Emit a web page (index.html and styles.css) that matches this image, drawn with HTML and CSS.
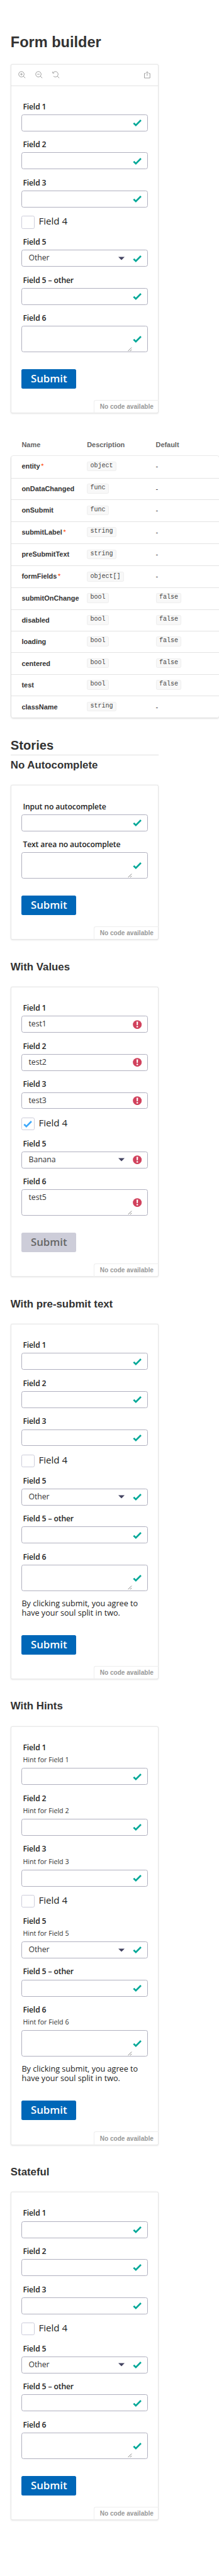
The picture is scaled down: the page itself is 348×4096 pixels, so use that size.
FILE: index.html
```html
<!DOCTYPE html>
<html lang="en">
<head>
<meta charset="utf-8">
<title>Form builder</title>
<link rel="stylesheet" href="styles.css">
</head>
<body>
<svg class="sprite" aria-hidden="true">
  <symbol id="ok" viewBox="0 0 17 17"><path d="M1.6 9.2l4.2 4.1 9.6-9.7" fill="none" stroke="currentColor" stroke-width="3.2"/></symbol>
  <symbol id="bad" viewBox="0 0 17 17"><circle cx="8.5" cy="8.5" r="8.3" fill="currentColor"/><path d="M7 3h3l-.4 6.6H7.400z" fill="#fff"/><circle cx="8.500" cy="12.600" r="1.500" fill="#fff"/></symbol>
  <symbol id="grip" viewBox="0 0 8 8"><path d="M.5 7.500l7-7M4.500 7.500l3-3" fill="none" stroke="#444" stroke-width=".8"/></symbol>
  <symbol id="caret" viewBox="0 0 12 7"><path d="M0 .5h12L6 6.500z" fill="#434361"/></symbol>
</svg>
<main class="page">
<h1>Form builder</h1>
<section class="preview with-bar">
  <div class="toolbar">
    <svg viewBox="0 0 14 14"><circle cx="6" cy="6" r="5.100"/><path d="M9.700 9.700l3.600 3.600M3.700 6h4.600M6 3.700v4.600"/></svg>
    <svg viewBox="0 0 14 14"><circle cx="6" cy="6" r="5.100"/><path d="M9.700 9.700l3.600 3.600M3.700 6h4.600"/></svg>
    <svg viewBox="0 0 14 14"><path d="M1.700 3.300A5.100 5.100 0 1 1 2.400 9.600M9.700 9.700l3.600 3.600M.900 1v2.800h2.800"/></svg>
    <svg class="share" viewBox="0 0 14 14"><path d="M4.300 4.500H1.800v8.600h10.400V4.500H9.700M7 9V1.500M4.900 3.200L7 1.100l2.100 2.100"/></svg>
  </div>
  <div class="form">
    <div class="label">Field 1</div><div class="input"><svg class="state"><use href="#ok"/></svg></div>
    <div class="label">Field 2</div><div class="input"><svg class="state"><use href="#ok"/></svg></div>
    <div class="label">Field 3</div><div class="input"><svg class="state"><use href="#ok"/></svg></div>
    <div class="check"><span class="box"></span><span>Field 4</span></div>
    <div class="label">Field 5</div><div class="input"><span class="value">Other</span><svg class="caret"><use href="#caret"/></svg><svg class="state"><use href="#ok"/></svg></div>
    <div class="label">Field 5 – other</div><div class="input"><svg class="state"><use href="#ok"/></svg></div>
    <div class="label">Field 6</div><div class="input area"><svg class="grip"><use href="#grip"/></svg><svg class="state"><use href="#ok"/></svg></div>
    <div class="submit">Submit</div>
  </div>
  <div class="tag">No code available</div>
</section>

<div class="props">
  <div class="head"><span>Name</span><span>Description</span><span>Default</span></div>
  <div class="rows">
    <div class="row tall"><b>entity<i>*</i></b><span><code>object</code></span><span>-</span></div>
    <div class="row"><b>onDataChanged</b><span><code>func</code></span><span>-</span></div>
    <div class="row"><b>onSubmit</b><span><code>func</code></span><span>-</span></div>
    <div class="row tall"><b>submitLabel<i>*</i></b><span><code>string</code></span><span>-</span></div>
    <div class="row"><b>preSubmitText</b><span><code>string</code></span><span>-</span></div>
    <div class="row tall list"><b>formFields<i>*</i></b><span><code>object[]</code></span><span>-</span></div>
    <div class="row"><b>submitOnChange</b><span><code>bool</code></span><span><code>false</code></span></div>
    <div class="row"><b>disabled</b><span><code>bool</code></span><span><code>false</code></span></div>
    <div class="row"><b>loading</b><span><code>bool</code></span><span><code>false</code></span></div>
    <div class="row"><b>centered</b><span><code>bool</code></span><span><code>false</code></span></div>
    <div class="row"><b>test</b><span><code>bool</code></span><span><code>false</code></span></div>
    <div class="row"><b>className</b><span><code>string</code></span><span>-</span></div>
  </div>
</div>

<h2>Stories</h2>
<h3 class="first">No Autocomplete</h3>
<section class="preview">
  <div class="form">
    <div class="label">Input no autocomplete</div><div class="input"><svg class="state"><use href="#ok"/></svg></div>
    <div class="label">Text area no autocomplete</div><div class="input area"><svg class="grip"><use href="#grip"/></svg><svg class="state"><use href="#ok"/></svg></div>
    <div class="submit">Submit</div>
  </div>
  <div class="tag">No code available</div>
</section>

<h3>With Values</h3>
<section class="preview">
  <div class="form invalid">
    <div class="label">Field 1</div><div class="input"><span class="value">test1</span><svg class="state"><use href="#bad"/></svg></div>
    <div class="label">Field 2</div><div class="input"><span class="value">test2</span><svg class="state"><use href="#bad"/></svg></div>
    <div class="label">Field 3</div><div class="input"><span class="value">test3</span><svg class="state"><use href="#bad"/></svg></div>
    <div class="check"><span class="box"><svg class="tick"><use href="#ok"/></svg></span><span>Field 4</span></div>
    <div class="label">Field 5</div><div class="input"><span class="value">Banana</span><svg class="caret"><use href="#caret"/></svg><svg class="state"><use href="#bad"/></svg></div>
    <div class="label">Field 6</div><div class="input area"><span class="value">test5</span><svg class="grip"><use href="#grip"/></svg><svg class="state"><use href="#bad"/></svg></div>
    <div class="submit disabled">Submit</div>
  </div>
  <div class="tag">No code available</div>
</section>

<h3>With pre-submit text</h3>
<section class="preview">
  <div class="form">
    <div class="label">Field 1</div><div class="input"><svg class="state"><use href="#ok"/></svg></div>
    <div class="label">Field 2</div><div class="input"><svg class="state"><use href="#ok"/></svg></div>
    <div class="label">Field 3</div><div class="input"><svg class="state"><use href="#ok"/></svg></div>
    <div class="check"><span class="box"></span><span>Field 4</span></div>
    <div class="label">Field 5</div><div class="input"><span class="value">Other</span><svg class="caret"><use href="#caret"/></svg><svg class="state"><use href="#ok"/></svg></div>
    <div class="label">Field 5 – other</div><div class="input"><svg class="state"><use href="#ok"/></svg></div>
    <div class="label">Field 6</div><div class="input area"><svg class="grip"><use href="#grip"/></svg><svg class="state"><use href="#ok"/></svg></div>
    <p class="terms">By clicking submit, you agree to<br>have your soul split in two.</p>
    <div class="submit">Submit</div>
  </div>
  <div class="tag">No code available</div>
</section>

<h3>With Hints</h3>
<section class="preview">
  <div class="form">
    <div class="label">Field 1</div><div class="hint">Hint for Field 1</div><div class="input"><svg class="state"><use href="#ok"/></svg></div>
    <div class="label">Field 2</div><div class="hint">Hint for Field 2</div><div class="input"><svg class="state"><use href="#ok"/></svg></div>
    <div class="label">Field 3</div><div class="hint">Hint for Field 3</div><div class="input"><svg class="state"><use href="#ok"/></svg></div>
    <div class="check"><span class="box"></span><span>Field 4</span></div>
    <div class="label">Field 5</div><div class="hint">Hint for Field 5</div><div class="input"><span class="value">Other</span><svg class="caret"><use href="#caret"/></svg><svg class="state"><use href="#ok"/></svg></div>
    <div class="label">Field 5 – other</div><div class="input"><svg class="state"><use href="#ok"/></svg></div>
    <div class="label">Field 6</div><div class="hint">Hint for Field 6</div><div class="input area"><svg class="grip"><use href="#grip"/></svg><svg class="state"><use href="#ok"/></svg></div>
    <p class="terms">By clicking submit, you agree to<br>have your soul split in two.</p>
    <div class="submit">Submit</div>
  </div>
  <div class="tag">No code available</div>
</section>

<h3>Stateful</h3>
<section class="preview">
  <div class="form">
    <div class="label">Field 1</div><div class="input"><svg class="state"><use href="#ok"/></svg></div>
    <div class="label">Field 2</div><div class="input"><svg class="state"><use href="#ok"/></svg></div>
    <div class="label">Field 3</div><div class="input"><svg class="state"><use href="#ok"/></svg></div>
    <div class="check"><span class="box"></span><span>Field 4</span></div>
    <div class="label">Field 5</div><div class="input"><span class="value">Other</span><svg class="caret"><use href="#caret"/></svg><svg class="state"><use href="#ok"/></svg></div>
    <div class="label">Field 5 – other</div><div class="input"><svg class="state"><use href="#ok"/></svg></div>
    <div class="label">Field 6</div><div class="input area"><svg class="grip"><use href="#grip"/></svg><svg class="state"><use href="#ok"/></svg></div>
    <div class="submit">Submit</div>
  </div>
  <div class="tag">No code available</div>
</section>
</main>
</body>
</html>
```
FILE: styles.css
```css
* { box-sizing: border-box; }
html { overflow: hidden; background: #fff; }
body { margin: 0; }
.sprite { position: absolute; width: 0; height: 0; }

.page {
  zoom: 0.8412;
  width: 414px;
  height: 4869px;
  padding: 63.6px 0 0 20px;
  overflow: hidden;
  font-family: "Liberation Sans", sans-serif;
  color: #333;
}
h1, h2, h3, p { margin: 0; }
h1 { font-size: 28px; line-height: 32px; margin-bottom: 25.700px; }
h2 { width: 280px; height: 32px; margin: 39.300px 0 7.700px; border-bottom: 1px solid #e0e0e0; font-size: 24px; line-height: 28px; }
h3 { margin: 39.700px 0 25.200px; font-size: 20px; line-height: 24px; }
h3.first { margin: 0 0 24.800px; }

/* preview card */
.preview {
  display: flex;
  flex-direction: column;
  width: 280px;
  padding-top: 31px;
  border-radius: 4px;
  box-shadow: inset 0 0 0 1px #e2e2e2, 0 1px 3px rgba(0, 0, 0, .1);
}
.preview.with-bar { padding-top: 0; }
.toolbar {
  display: flex;
  align-items: center;
  gap: 18px;
  height: 41px;
  margin-bottom: 30px;
  padding: 0 14.500px 0 15px;
  border-bottom: 1px solid #e2e2e2;
}
.toolbar svg { width: 14px; height: 14px; fill: none; stroke: #999; stroke-width: 1.100; }
.toolbar .share { margin-left: auto; }
.tag {
  align-self: flex-end;
  width: 122.500px;
  height: 25.500px;
  margin-top: 21px;
  padding: 4px 0 0 10px;
  border: solid #eee;
  border-width: 1px 0 0 1px;
  border-top-left-radius: 4px;
  font: bold 12px/16px "Liberation Sans", sans-serif;
  color: #999;
}

/* form */
.form { padding: 0 21px; font-family: "Open Sans", sans-serif; color: #222; }
.label { height: 24px; padding-left: 2.300px; font-size: 14.500px; font-weight: 600; line-height: 18.400px; letter-spacing: -.17px; }
.hint { height: 24px; padding-left: 2.300px; font-size: 12.700px; line-height: 18px; color: #333; }
.input {
  display: flex;
  align-items: center;
  justify-content: flex-end;
  height: 32px;
  margin-bottom: 16px;
  padding: 0 9.400px 0 12px;
  border: 1px solid #b0b0bf;
  border-radius: 4px;
}
.area { height: 50px; }
.value { margin-right: auto; font-size: 14.600px; line-height: 20px; letter-spacing: -.1px; color: #333; }
.area .value { align-self: flex-start; padding-top: 5px; }
.state { width: 17px; height: 17px; color: #00a898; }
.invalid .state { color: #d1425d; }
.caret { width: 12px; height: 7px; margin-right: 16.500px; }
.grip { align-self: flex-end; width: 8px; height: 8px; margin: 0 2px 1px 0; }
.check { display: flex; height: 24px; margin-bottom: 16px; font-size: 18px; line-height: 20.500px; gap: 8px; }
.box { display: flex; align-items: center; justify-content: center; width: 24px; height: 24px; border: 1px solid #cdcddb; border-radius: 3px; }
.tick { width: 17px; height: 17px; color: #3fa9fb; }
.terms { margin: -.5px 0 0; padding-bottom: .5px; font-size: 15px; line-height: 17.600px; white-space: nowrap; }
.submit {
  width: 103px;
  height: 37px;
  margin-top: 32px;
  border-radius: 3px;
  background: #0067b8;
  color: #fff;
  font-size: 20px;
  font-weight: 600;
  line-height: 35.500px;
  text-align: center;
}
.disabled { background: #cdcdd9; color: #666; }

/* props table */
.props { margin: 49.900px 0 0 1px; width: 393px; font-size: 13px; line-height: 20px; }
.head, .row { display: grid; grid-template-columns: 123.300px 130px 1fr; padding-left: 20px; }
.head { height: 29.900px; font-weight: bold; color: #666; }
.rows { height: 495px; border-radius: 4px; box-shadow: 0 1px 3px 1px rgba(0, 0, 0, .1), 0 0 0 1px rgba(0, 0, 0, .065); }
.row { height: 41px; padding-top: 10.600px; }
.row + .row { border-top: 1px solid #e3e3e3; padding-top: 9.600px; }
.row i { margin-left: 2px; font-style: normal; font-weight: normal; color: #ff4400; }
.rows .tall { height: 42px; }
.row code {
  display: block;
  width: max-content;
  height: 18.500px;
  margin-top: .5px;
  padding: 0 5.200px;
  border: 1px solid #eee;
  border-radius: 3px;
  background: #f8f8f8;
  font: 12px/15px "Liberation Mono", monospace;
  letter-spacing: -.05px;
  color: #444;
}
.list code { height: 19px; margin-top: 1.500px; line-height: 17px; }
```
